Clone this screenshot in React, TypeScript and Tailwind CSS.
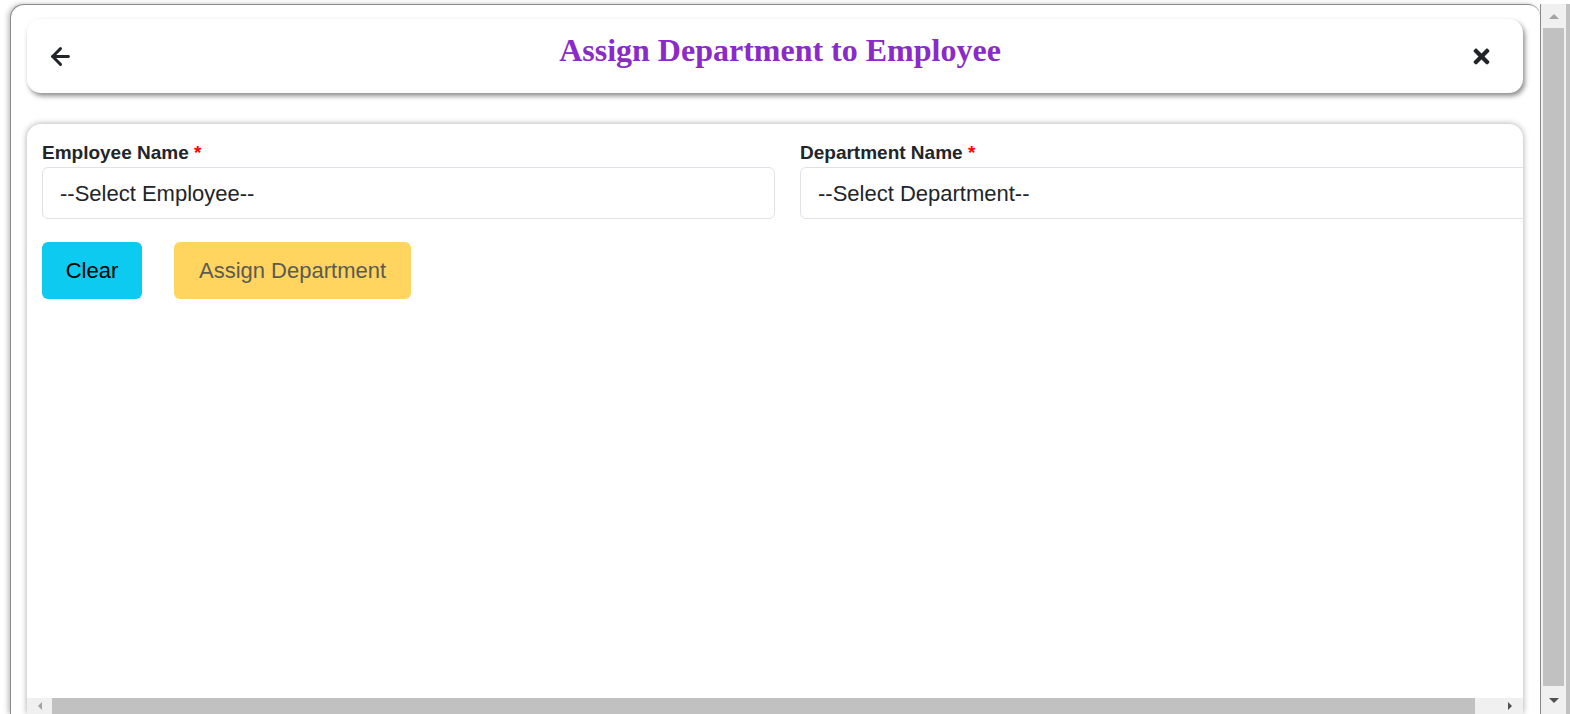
import React, { useState } from 'react';
import { ArrowLeft } from 'lucide-react';
import { FaTimes } from 'react-icons/fa';

const App: React.FC = () => {
  const [employee, setEmployee] = useState('');
  const [department, setDepartment] = useState('');

  const handleClear = () => {
    setEmployee('');
    setDepartment('');
  };

  return (
    <div className="flex h-[714px] w-[1570px] overflow-hidden bg-white font-['Liberation_Sans',Arial,sans-serif]">
      {/* Modal frame */}
      <div className="flex w-[1540px] min-w-0 shrink-0 flex-col pl-[10px] pt-[4px]">
        <div className="flex min-w-0 flex-1 flex-col overflow-hidden rounded-tl-[14px] rounded-tr-[12px] border-l border-t border-[#8a8a8a] bg-white pl-4 pr-[17px] pt-[14px] shadow-[-2px_0_5px_rgba(0,0,0,0.25)]">
          {/* Header card */}
          <div className="grid h-[74px] shrink-0 grid-cols-[1fr_auto_1fr] items-center rounded-[14px] bg-white pl-[20px] pr-[30px] shadow-[2px_3px_5px_rgba(0,0,0,0.45)]">
            <button className="justify-self-start text-[#212529]">
              <ArrowLeft size={27} strokeWidth={2.6} />
            </button>
            <h1 className="mb-[12px] ml-[20px] font-['Liberation_Serif',Cambria,serif] text-[32px] font-bold text-[#8a2bc9]">
              Assign Department to Employee
            </h1>
            <button className="justify-self-end text-[#212529]">
              <FaTimes size={23} />
            </button>
          </div>

          {/* Content card */}
          <div className="mt-[31px] flex min-w-0 flex-1 flex-col overflow-hidden rounded-t-[14px] bg-white shadow-[0_0_6px_rgba(0,0,0,0.35)]">
            <div className="min-w-0 flex-1 overflow-hidden">
              <div className="w-[1520px] px-[15px] pt-[15px]">
                <div className="grid grid-cols-[733px_733px] gap-x-[25px]">
                  <div>
                    <label className="block text-[19px] font-bold leading-[28px] text-[#212529]">
                      Employee Name <span className="text-[#ff0000]">*</span>
                    </label>
                    <select
                      value={employee}
                      onChange={(e) => setEmployee(e.target.value)}
                      className="h-[52px] w-full appearance-none rounded-[6px] border border-[#dee2e6] bg-white px-[17px] text-[22px] text-[#212529]"
                    >
                      <option value="">--Select Employee--</option>
                    </select>
                  </div>
                  <div>
                    <label className="block text-[19px] font-bold leading-[28px] text-[#212529]">
                      Department Name <span className="text-[#ff0000]">*</span>
                    </label>
                    <select
                      value={department}
                      onChange={(e) => setDepartment(e.target.value)}
                      className="h-[52px] w-full appearance-none rounded-[6px] border border-[#dee2e6] bg-white px-[17px] text-[22px] text-[#212529]"
                    >
                      <option value="">--Select Department--</option>
                    </select>
                  </div>
                </div>

                <div className="mt-[23px] flex gap-[32px]">
                  <button
                    onClick={handleClear}
                    className="h-[57px] w-[100px] rounded-[6px] bg-[#0dcaf0] text-[22px] text-black"
                  >
                    Clear
                  </button>
                  <button
                    disabled
                    className="h-[57px] w-[237px] rounded-[6px] bg-[#ffd55f] text-[22px] text-[#5c5a52]"
                  >
                    Assign Department
                  </button>
                </div>
              </div>
            </div>

            {/* Horizontal scrollbar */}
            <div className="flex h-[16px] shrink-0 items-center bg-[#f0f0f0]">
              <div className="flex w-[25px] justify-center">
                <div className="h-0 w-0 border-y-[4px] border-r-[4px] border-y-transparent border-r-[#a3a3a3]" />
              </div>
              <div className="h-full flex-1 bg-[#c1c1c1]" />
              <div className="flex w-[48px] justify-center pl-[22px]">
                <div className="h-0 w-0 border-y-[4px] border-l-[4px] border-y-transparent border-l-[#505050]" />
              </div>
            </div>
          </div>
        </div>
      </div>

      {/* Vertical scrollbar */}
      <div className="flex w-[30px] shrink-0 pt-[4px]">
        <div className="flex w-[26px] flex-col items-center border-l border-[#8a8a8a] bg-[#f0f0f0]">
          <div className="flex h-[24px] items-center justify-center">
            <div className="h-0 w-0 border-x-[5px] border-b-[5px] border-x-transparent border-b-[#a3a3a3]" />
          </div>
          <div className="w-[21px] flex-1 bg-[#c1c1c1]" />
          <div className="flex h-[28px] items-center justify-center">
            <div className="h-0 w-0 border-x-[5px] border-t-[5px] border-x-transparent border-t-[#505050]" />
          </div>
        </div>
        <div className="w-[4px] bg-[#c1c1c1]" />
      </div>
    </div>
  );
};

export default App;
